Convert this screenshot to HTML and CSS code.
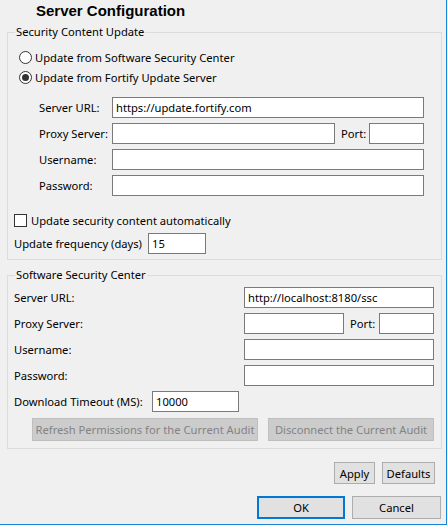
FILE: index.html
```html
<!DOCTYPE html>
<html>
<head>
<meta charset="utf-8">
<link rel="stylesheet" href="styles.css">
</head>
<body>
<div class="window">
  <h1 class="title">Server Configuration</h1>

  <fieldset class="group group-update">
    <legend>Security Content Update</legend>
    <div class="radio-row"><span class="radio"></span><span>Update from Software Security Center</span></div>
    <div class="radio-row"><span class="radio checked"></span><span>Update from Fortify Update Server</span></div>
    <div class="form form-update">
      <span class="lbl">Server URL:</span>
      <div class="field">https://update.fortify.com</div>
      <span class="lbl">Proxy Server:</span>
      <div class="proxy">
        <div class="field proxy-field"></div>
        <span class="port-lbl">Port:</span>
        <div class="field port-field"></div>
      </div>
      <span class="lbl">Username:</span>
      <div class="field"></div>
      <span class="lbl">Password:</span>
      <div class="field"></div>
    </div>
    <div class="check-row"><span class="checkbox"></span><span>Update security content automatically</span></div>
    <div class="inline-row freq-row">
      <span class="lbl freq-lbl">Update frequency (days)</span>
      <div class="field freq-field">15</div>
    </div>
  </fieldset>

  <fieldset class="group group-ssc">
    <legend>Software Security Center</legend>
    <div class="form form-ssc">
      <span class="lbl">Server URL:</span>
      <div class="field">http://localhost:8180/ssc</div>
      <span class="lbl">Proxy Server:</span>
      <div class="proxy">
        <div class="field proxy-field-ssc"></div>
        <span class="port-lbl">Port:</span>
        <div class="field port-field"></div>
      </div>
      <span class="lbl">Username:</span>
      <div class="field"></div>
      <span class="lbl">Password:</span>
      <div class="field"></div>
    </div>
    <div class="inline-row timeout-row">
      <span class="lbl timeout-lbl">Download Timeout (MS):</span>
      <div class="field timeout-field">10000</div>
    </div>
    <div class="ssc-buttons">
      <button class="btn btn-disabled btn-refresh" disabled>Refresh Permissions for the Current Audit</button>
      <button class="btn btn-disabled btn-disconnect" disabled>Disconnect the Current Audit</button>
    </div>
  </fieldset>

  <div class="actions actions-apply">
    <button class="btn btn-apply">Apply</button>
    <button class="btn btn-defaults">Defaults</button>
  </div>
  <div class="actions actions-main">
    <button class="btn btn-ok">OK</button>
    <button class="btn btn-cancel">Cancel</button>
  </div>
</div>
</body>
</html>
```

FILE: styles.css
```css
* {
  box-sizing: border-box;
}

html, body {
  margin: 0;
  padding: 0;
  background: #f0f0f0;
}

body {
  font-family: "Noto Sans", "Open Sans", sans-serif;
  font-size: 11.2px;
  color: #000;
}

.window {
  width: 447px;
  height: 525px;
  background: #f0f0f0;
  border-right: 1px solid #1883d7;
  border-bottom: 1px solid #1883d7;
  overflow: hidden;
}

.title {
  margin: 0;
  height: 24px;
  padding-left: 36px;
  font-family: "Liberation Sans", Arial, sans-serif;
  font-size: 15px;
  font-weight: bold;
  line-height: 22px;
}

.group {
  width: 435px;
  margin: 0 0 0 7px;
  padding: 0;
  border: 1px solid #dcdcdc;
  min-width: 0;
}

.group legend {
  margin-left: 7px;
  padding: 0 1px;
  line-height: 16px;
}

.group-update {
  padding-top: 7px;
  padding-bottom: 5px;
}

.group-ssc {
  margin-top: 7px;
  padding-top: 4px;
  padding-bottom: 7px;
}

.radio-row,
.check-row {
  display: flex;
  align-items: center;
  height: 20px;
}

.radio-row {
  margin-left: 11px;
}

.radio {
  width: 13px;
  height: 13px;
  border: 1px solid #333;
  border-radius: 50%;
  background: #fff;
  margin-right: 3px;
  display: flex;
  align-items: center;
  justify-content: center;
  flex-shrink: 0;
}

.radio.checked::after {
  content: "";
  width: 7px;
  height: 7px;
  border-radius: 50%;
  background: #333;
}

.check-row {
  margin: 14px 0 0 6px;
}

.checkbox {
  width: 13px;
  height: 13px;
  border: 1px solid #333;
  background: #fff;
  margin-right: 4px;
  flex-shrink: 0;
}

.form {
  display: grid;
  row-gap: 5px;
}

.form-update {
  grid-template-columns: 73px 312px;
  margin: 10px 0 0 31px;
}

.form-ssc {
  grid-template-columns: 230px 190px;
  margin-left: 6px;
}

.lbl {
  line-height: 21px;
  white-space: nowrap;
}

.field {
  height: 21px;
  border: 1px solid #7a7a7a;
  background: #fff;
  padding: 0 3px;
  line-height: 19px;
  white-space: nowrap;
  overflow: hidden;
}

.proxy {
  display: flex;
  align-items: center;
}

.proxy-field {
  width: 223px;
}

.proxy-field-ssc {
  width: 100px;
}

.port-lbl {
  margin-left: 6px;
  line-height: 21px;
}

.port-field {
  width: 55px;
  margin-left: auto;
}

.inline-row {
  display: flex;
  align-items: center;
  margin-left: 6px;
}

.freq-row {
  margin-top: 3px;
}

.freq-lbl {
  width: 134px;
}

.freq-field {
  width: 58px;
}

.timeout-row {
  margin-top: 5px;
}

.timeout-lbl {
  width: 138px;
}

.timeout-field {
  width: 87px;
}

.ssc-buttons {
  display: flex;
  gap: 10px;
  margin: 6px 0 0 24px;
}

.btn {
  font-family: inherit;
  font-size: 11.2px;
  height: 23px;
  padding: 0;
  border: 1px solid #adadad;
  background: #e1e1e1;
  color: #000;
  line-height: 19px;
  white-space: nowrap;
}

.btn-disabled {
  background: #cccccc;
  border-color: #bfbfbf;
  color: #838383;
}

.btn-refresh {
  width: 226px;
}

.btn-disconnect {
  width: 166px;
}

.actions {
  display: flex;
  justify-content: flex-end;
  gap: 7px;
}

.actions-apply {
  margin: 13px 11px 0 0;
}

.btn-apply,
.btn-defaults {
  height: 22px;
}

.btn-apply {
  width: 41px;
}

.btn-defaults {
  width: 53px;
}

.actions-main {
  margin: 12px 5px 0 0;
}

.btn-ok {
  width: 88px;
  border: 2px solid #0078d7;
}

.btn-cancel {
  width: 89px;
}
```
